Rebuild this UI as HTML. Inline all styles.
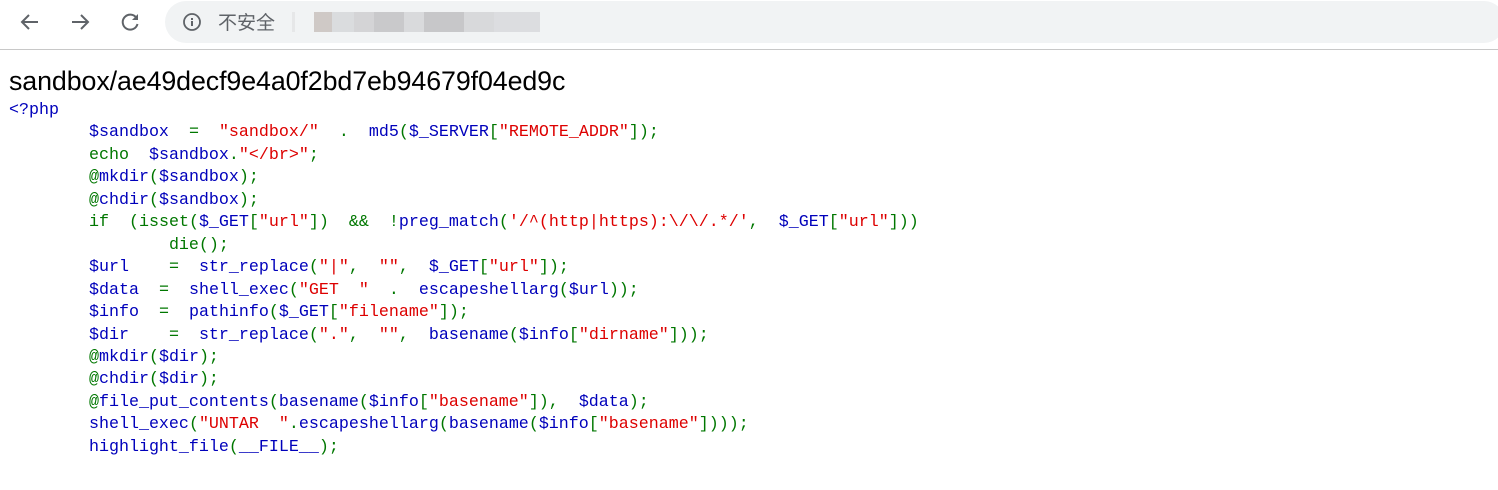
<!DOCTYPE html>
<html><head><meta charset="utf-8"><style>
body{margin:0;width:1498px;height:490px;background:#fff;overflow:hidden;font-family:"Liberation Sans","Noto Sans CJK SC",sans-serif}
.bar{position:absolute;left:0;top:0;width:1498px;height:49px;background:#fff;border-bottom:1px solid #c8c8c8}
.pill{position:absolute;left:165px;top:1px;width:1340px;height:42px;border-radius:21px;background:#f1f3f4}
.blur{position:absolute;top:12px;height:20px}
h1{position:absolute;left:9px;top:66px;margin:0;font-weight:normal;font-size:26.8px;color:#000;letter-spacing:-0.1px}
pre{position:absolute;left:9px;top:100px;margin:0;font-family:"Liberation Mono",monospace;font-size:16.67px;line-height:22.45px;color:#0000BB}
.g{color:#007700}.r{color:#DD0000}.b{color:#0000BB}
</style></head><body>
<div class="bar">
<svg style="position:absolute;left:18px;top:10px" width="24" height="24" viewBox="0 0 24 24"><path d="M20 12H5M11 5l-7 7 7 7" fill="none" stroke="#5f6368" stroke-width="2"/></svg>
<svg style="position:absolute;left:68px;top:10px" width="24" height="24" viewBox="0 0 24 24"><path d="M4 12h15M13 5l7 7-7 7" fill="none" stroke="#5f6368" stroke-width="2"/></svg>
<svg style="position:absolute;left:118px;top:10px" width="24" height="24" viewBox="0 0 24 24"><path d="M18.5 8A7.5 7.5 0 1 0 19.5 14" fill="none" stroke="#5f6368" stroke-width="2"/><path d="M20 4v6h-6z" fill="#5f6368"/></svg>
<div class="pill"></div>
<svg style="position:absolute;left:182px;top:12px" width="20" height="20" viewBox="0 0 20 20"><circle cx="10" cy="10" r="8" fill="none" stroke="#5f6368" stroke-width="1.8"/><rect x="9" y="9" width="2" height="5" fill="#5f6368"/><rect x="9" y="6" width="2" height="2" fill="#5f6368"/></svg>
<div style="position:absolute;left:218px;top:8px;font-size:19px;color:#5f6368">不安全</div>
<div class="blur" style="left:292px;width:3px;background:#e6e7e8"></div>
<div class="blur" style="left:314px;width:226px;background:linear-gradient(90deg,#cfc9c6 0 18px,#dadcde 18px 40px,#d4d4d6 40px 60px,#c9c9cb 60px 90px,#d9dadc 90px 110px,#c7c7c9 110px 150px,#d8d9db 150px 180px,#dcdde0 180px 226px)"></div>
</div>
<h1>sandbox/ae49decf9e4a0f2bd7eb94679f04ed9c</h1>
<pre><span class="b">&lt;?php</span>
        <span class="b">$sandbox</span>  <span class="g">=</span>  <span class="r">"sandbox/"</span>  <span class="g">.</span>  <span class="b">md5</span><span class="g">(</span><span class="b">$_SERVER</span><span class="g">[</span><span class="r">"REMOTE_ADDR"</span><span class="g">]);</span>
        <span class="g">echo</span>  <span class="b">$sandbox</span><span class="g">.</span><span class="r">"&lt;/br&gt;"</span><span class="g">;</span>
        <span class="g">@</span><span class="b">mkdir</span><span class="g">(</span><span class="b">$sandbox</span><span class="g">);</span>
        <span class="g">@</span><span class="b">chdir</span><span class="g">(</span><span class="b">$sandbox</span><span class="g">);</span>
        <span class="g">if</span>  <span class="g">(isset(</span><span class="b">$_GET</span><span class="g">[</span><span class="r">"url"</span><span class="g">])</span>  <span class="g">&amp;&amp;</span>  <span class="g">!</span><span class="b">preg_match</span><span class="g">(</span><span class="r">'/^(http|https):\/\/.*/'</span><span class="g">,</span>  <span class="b">$_GET</span><span class="g">[</span><span class="r">"url"</span><span class="g">]))</span>
                <span class="g">die();</span>
        <span class="b">$url</span>    <span class="g">=</span>  <span class="b">str_replace</span><span class="g">(</span><span class="r">"|"</span><span class="g">,</span>  <span class="r">""</span><span class="g">,</span>  <span class="b">$_GET</span><span class="g">[</span><span class="r">"url"</span><span class="g">]);</span>
        <span class="b">$data</span>  <span class="g">=</span>  <span class="b">shell_exec</span><span class="g">(</span><span class="r">"GET  "</span>  <span class="g">.</span>  <span class="b">escapeshellarg</span><span class="g">(</span><span class="b">$url</span><span class="g">));</span>
        <span class="b">$info</span>  <span class="g">=</span>  <span class="b">pathinfo</span><span class="g">(</span><span class="b">$_GET</span><span class="g">[</span><span class="r">"filename"</span><span class="g">]);</span>
        <span class="b">$dir</span>    <span class="g">=</span>  <span class="b">str_replace</span><span class="g">(</span><span class="r">"."</span><span class="g">,</span>  <span class="r">""</span><span class="g">,</span>  <span class="b">basename</span><span class="g">(</span><span class="b">$info</span><span class="g">[</span><span class="r">"dirname"</span><span class="g">]));</span>
        <span class="g">@</span><span class="b">mkdir</span><span class="g">(</span><span class="b">$dir</span><span class="g">);</span>
        <span class="g">@</span><span class="b">chdir</span><span class="g">(</span><span class="b">$dir</span><span class="g">);</span>
        <span class="g">@</span><span class="b">file_put_contents</span><span class="g">(</span><span class="b">basename</span><span class="g">(</span><span class="b">$info</span><span class="g">[</span><span class="r">"basename"</span><span class="g">]),</span>  <span class="b">$data</span><span class="g">);</span>
        <span class="b">shell_exec</span><span class="g">(</span><span class="r">"UNTAR  "</span><span class="g">.</span><span class="b">escapeshellarg</span><span class="g">(</span><span class="b">basename</span><span class="g">(</span><span class="b">$info</span><span class="g">[</span><span class="r">"basename"</span><span class="g">])));</span>
        <span class="b">highlight_file</span><span class="g">(</span><span class="b">__FILE__</span><span class="g">);</span></pre>
</body></html>
